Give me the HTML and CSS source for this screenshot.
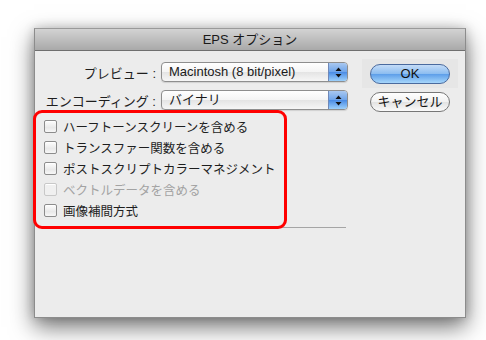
FILE: index.html
```html
<!DOCTYPE html>
<html lang="ja">
<head>
<meta charset="utf-8">
<link rel="stylesheet" href="styles.css">
</head>
<body>
<div class="window">
  <div class="titlebar">EPS オプション</div>
  <div class="content">
    <div class="main">
      <div class="form-row">
        <span class="label">プレビュー :</span>
        <div class="popup"><span class="popup-text">Macintosh (8 bit/pixel)</span><span class="arrows"><svg width="7" height="11" viewBox="0 0 7 11"><path d="M3.5 0.5 L6.5 4 L0.5 4 Z M3.5 10.5 L6.5 7 L0.5 7 Z" fill="#111"/></svg></span></div>
      </div>
      <div class="form-row">
        <span class="label">エンコーディング :</span>
        <div class="popup"><span class="popup-text">バイナリ</span><span class="arrows"><svg width="7" height="11" viewBox="0 0 7 11"><path d="M3.5 0.5 L6.5 4 L0.5 4 Z M3.5 10.5 L6.5 7 L0.5 7 Z" fill="#111"/></svg></span></div>
      </div>
      <ul class="checks">
        <li class="check"><span class="box"></span>ハーフトーンスクリーンを含める</li>
        <li class="check"><span class="box"></span>トランスファー関数を含める</li>
        <li class="check"><span class="box"></span>ポストスクリプトカラーマネジメント</li>
        <li class="check disabled"><span class="box"></span>ベクトルデータを含める</li>
        <li class="check"><span class="box"></span>画像補間方式</li>
      </ul>
      <div class="separator"></div>
    </div>
    <div class="buttons">
      <div class="default-wrap"><div class="btn ok">OK</div></div>
      <div class="btn cancel">キャンセル</div>
    </div>
  </div>
  <div class="highlight"></div>
</div>
</body>
</html>
```

FILE: styles.css
```css
html, body {
  margin: 0;
  padding: 0;
  background: #fff;
}
body {
  width: 486px;
  height: 340px;
  overflow: hidden;
  font-family: "Liberation Sans", "Noto Sans CJK JP", sans-serif;
  font-size: 13px;
  color: #1e1e1e;
}
.window {
  position: relative;
  margin: 28px 0 0 34px;
  width: 430px;
  height: 288px;
  background: #ececec;
  border: 1px solid #8c8c8c;
  border-top-color: #9a9a9a;
  box-shadow: 0 9px 22px rgba(0,0,0,0.55), 0 0 10px rgba(0,0,0,0.18);
}
.titlebar {
  height: 21px;
  line-height: 21px;
  text-align: center;
  background: linear-gradient(#d3d3d3, #a9a9a9);
  border-bottom: 1px solid #6f6f6f;
  color: #1a1a1a;
  font-size: 13px;
}
.content {
  display: flex;
  padding: 11px 0 0 9px;
}
.main {
  width: 304px;
}
.form-row {
  display: flex;
  align-items: center;
  height: 20px;
  margin-bottom: 8px;
}
.label {
  width: 112px;
  text-align: right;
  margin-right: 5px;
  white-space: nowrap;
  color: #1e1e1e;
}
.popup {
  display: flex;
  width: 185px;
  height: 18px;
  border: 1px solid #8e8e8e;
  border-radius: 4px;
  background: linear-gradient(#ffffff, #f4f4f4 50%, #e4e4e4 51%, #f6f6f6);
  overflow: hidden;
  box-shadow: 0 1px 1px rgba(0,0,0,0.12);
}
.popup-text {
  flex: 1;
  line-height: 18px;
  padding-left: 7px;
  white-space: nowrap;
  color: #1a1a1a;
}
.arrows {
  width: 18px;
  display: flex;
  align-items: center;
  justify-content: center;
  border-left: 1px solid #6f88b8;
  background: linear-gradient(#a9c8f0, #6ea4ea 50%, #4a8be4 51%, #9cd0fb);
}
.checks {
  list-style: none;
  margin: 0;
  padding: 0;
  margin-top: -2px;
}
.check {
  display: flex;
  align-items: center;
  height: 21px;
  white-space: nowrap;
  font-size: 12.5px;
  color: #1e1e1e;
}
.box {
  width: 11px;
  height: 11px;
  margin-right: 6px;
  border: 1px solid #8c8c8c;
  border-radius: 2px;
  background: linear-gradient(#fdfdfd, #e9e9e9 60%, #f7f7f7);
  box-shadow: inset 0 1px 0 #fff;
}
.check.disabled {
  color: #a3a3a3;
}
.check.disabled .box {
  border-color: #c8c8c8;
  background: #f0f0f0;
}
.separator {
  margin-top: 6px;
  height: 1px;
  background: #a5a5a5;
  width: 302px;
}
.buttons {
  display: flex;
  flex-direction: column;
  align-items: center;
  margin-left: 14px;
  margin-top: -3px;
}
.default-wrap {
  width: 96px;
  height: 29px;
  display: flex;
  align-items: center;
  justify-content: center;
  background: #e6e6e6;
}
.btn {
  width: 78px;
  height: 18px;
  line-height: 18px;
  text-align: center;
  border-radius: 10px;
  font-size: 13px;
  color: #111;
}
.ok {
  border: 1px solid #4a6a9e;
  background: linear-gradient(#c4dcf7, #8bbcf0 50%, #5d9ee9 51%, #a6d6fb);
}
.cancel {
  margin-top: 4px;
  border: 1px solid #777;
  background: linear-gradient(#ffffff, #f1f1f1 50%, #e2e2e2 51%, #fafafa);
}
.highlight {
  position: absolute;
  left: -2px;
  top: 81px;
  width: 248px;
  height: 113px;
  border: 3px solid #ff0000;
  border-radius: 9px;
}
```
